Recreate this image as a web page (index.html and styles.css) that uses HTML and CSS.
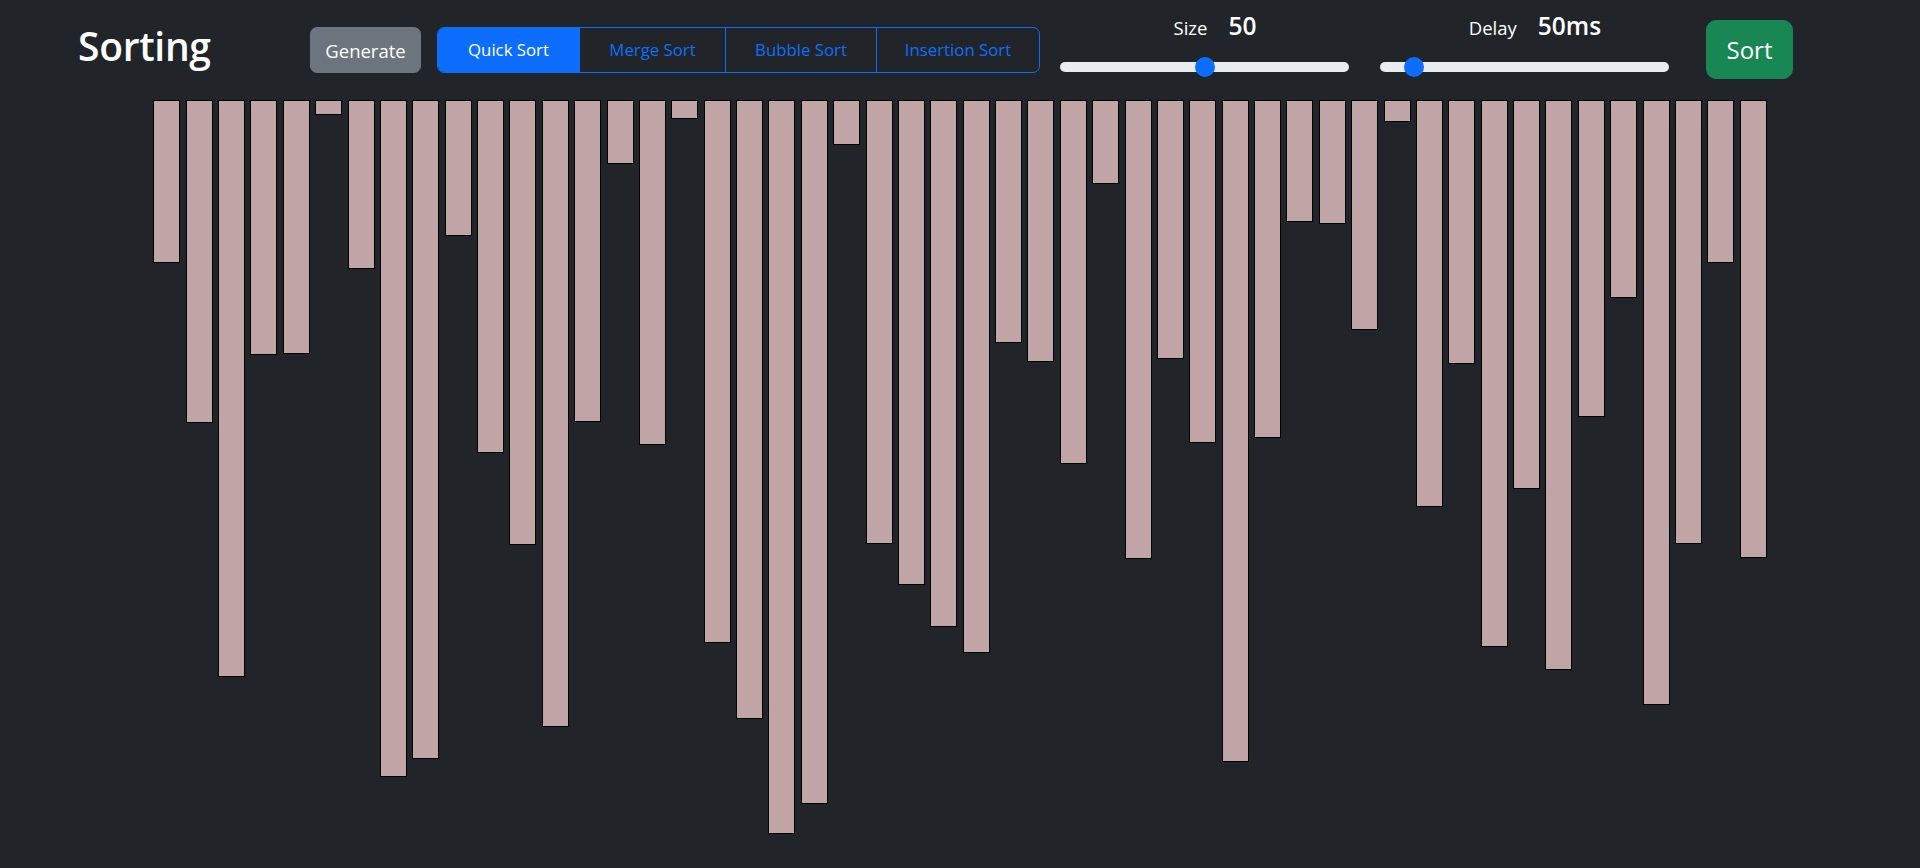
FILE: index.html
```html
<!DOCTYPE html>
<html lang="en">
<head>
<meta charset="utf-8">
<title>Sorting</title>
<link rel="stylesheet" href="styles.css">
</head>
<body>
<header class="topbar">
  <div class="brand-wrap"><h1 class="brand">Sorting</h1></div>
  <button class="btn btn-generate">Generate</button>
  <div class="algo-group">
    <button class="algo algo-quick active">Quick Sort</button>
    <button class="algo algo-merge">Merge Sort</button>
    <button class="algo algo-bubble">Bubble Sort</button>
    <button class="algo algo-insertion">Insertion Sort</button>
  </div>
  <div class="control control-size">
    <div class="control-label"><span class="label">Size</span><span class="value">50</span></div>
    <input type="range" class="range" min="0" max="100" value="50">
  </div>
  <div class="control control-delay">
    <div class="control-label"><span class="label">Delay</span><span class="value">50ms</span></div>
    <input type="range" class="range" min="10" max="450" value="50">
  </div>
  <button class="btn btn-sort">Sort</button>
</header>
<main class="bars">
  <div class="bar" style="height:163px"></div>
  <div class="bar" style="height:323px"></div>
  <div class="bar" style="height:577px"></div>
  <div class="bar" style="height:255px"></div>
  <div class="bar" style="height:254px"></div>
  <div class="bar" style="height:15px"></div>
  <div class="bar" style="height:169px"></div>
  <div class="bar" style="height:677px"></div>
  <div class="bar" style="height:659px"></div>
  <div class="bar" style="height:136px"></div>
  <div class="bar" style="height:353px"></div>
  <div class="bar" style="height:445px"></div>
  <div class="bar" style="height:627px"></div>
  <div class="bar" style="height:322px"></div>
  <div class="bar" style="height:64px"></div>
  <div class="bar" style="height:345px"></div>
  <div class="bar" style="height:19px"></div>
  <div class="bar" style="height:543px"></div>
  <div class="bar" style="height:619px"></div>
  <div class="bar" style="height:734px"></div>
  <div class="bar" style="height:704px"></div>
  <div class="bar" style="height:45px"></div>
  <div class="bar" style="height:444px"></div>
  <div class="bar" style="height:485px"></div>
  <div class="bar" style="height:527px"></div>
  <div class="bar" style="height:553px"></div>
  <div class="bar" style="height:243px"></div>
  <div class="bar" style="height:262px"></div>
  <div class="bar" style="height:364px"></div>
  <div class="bar" style="height:84px"></div>
  <div class="bar" style="height:459px"></div>
  <div class="bar" style="height:259px"></div>
  <div class="bar" style="height:343px"></div>
  <div class="bar" style="height:662px"></div>
  <div class="bar" style="height:338px"></div>
  <div class="bar" style="height:122px"></div>
  <div class="bar" style="height:124px"></div>
  <div class="bar" style="height:230px"></div>
  <div class="bar" style="height:22px"></div>
  <div class="bar" style="height:407px"></div>
  <div class="bar" style="height:264px"></div>
  <div class="bar" style="height:547px"></div>
  <div class="bar" style="height:389px"></div>
  <div class="bar" style="height:570px"></div>
  <div class="bar" style="height:317px"></div>
  <div class="bar" style="height:198px"></div>
  <div class="bar" style="height:605px"></div>
  <div class="bar" style="height:444px"></div>
  <div class="bar" style="height:163px"></div>
  <div class="bar" style="height:458px"></div>
</main>
</body>
</html>
```

FILE: styles.css
```css
html, body {
  margin: 0;
  padding: 0;
  background: #212529;
  color: #ffffff;
  font-family: "Open Sans", "Noto Sans", "DejaVu Sans", sans-serif;
  height: 100%;
  overflow: hidden;
}

.topbar {
  display: flex;
  align-items: center;
  height: 99.5px;
  box-sizing: border-box;
}

.brand-wrap {
  flex: 0 0 232px;
  margin-left: 78px;
  padding-bottom: 7px;
}

.brand {
  margin: 0;
  font-size: 39px;
  font-weight: 600;
  line-height: 48px;
  color: #ffffff;
  letter-spacing: -0.3px;
}

.btn {
  font-family: inherit;
  border: 1px solid transparent;
  color: #ffffff;
  cursor: pointer;
  box-sizing: border-box;
  padding: 0;
  text-align: center;
}

.btn-generate {
  width: 111px;
  height: 46.5px;
  background: #6c757d;
  border-color: #6c757d;
  border-radius: 7px;
  font-size: 18.5px;
  padding-top: 2px;
  margin-right: 16px;
}

.algo-group {
  display: flex;
  height: 46.5px;
  box-sizing: border-box;
  border: 1px solid #0d6efd;
  border-radius: 7px;
  overflow: hidden;
  margin-right: 20px;
}

.algo {
  font-family: inherit;
  font-size: 16.8px;
  color: #0d6efd;
  background: transparent;
  border: 0;
  border-left: 1px solid #0d6efd;
  box-sizing: border-box;
  padding: 0;
  height: 100%;
  text-align: center;
}

.algo-quick { width: 141px; border-left: 0; }
.algo-merge { width: 146px; }
.algo-bubble { width: 151px; }
.algo-insertion { width: 163px; }

.algo.active {
  background: #0d6efd;
  color: #ffffff;
}

.control {
  display: flex;
  flex-direction: column;
  align-items: center;
  width: 289px;
  padding-bottom: 9.5px;
}

.control-size { margin-right: 31px; }
.control-delay { margin-right: 37px; }

.control-label {
  display: flex;
  align-items: baseline;
  gap: 21px;
  padding-left: 21px;
  line-height: 25px;
  height: 25px;
  margin-bottom: 19.5px;
}

.label {
  font-size: 18.5px;
  color: #ffffff;
}

.value {
  font-size: 24.5px;
  font-weight: 600;
  color: #ffffff;
}

.range {
  -webkit-appearance: none;
  appearance: none;
  display: block;
  width: 289px;
  height: 20px;
  margin: 0;
  padding: 0;
  background: transparent;
}

.range::-webkit-slider-runnable-track {
  height: 10px;
  background: #e9ecef;
  border-radius: 10px;
  border: 0;
}

.range::-webkit-slider-thumb {
  -webkit-appearance: none;
  appearance: none;
  width: 20px;
  height: 20px;
  border-radius: 50%;
  background: #0d6efd;
  border: 0;
  margin-top: -5px;
}

.btn-sort {
  width: 87px;
  height: 59px;
  background: #198754;
  border-color: #198754;
  border-radius: 10px;
  font-size: 24px;
}

.bars {
  display: flex;
  justify-content: center;
  align-items: flex-start;
  gap: 5.39px;
}

.bar {
  flex: 0 0 27px;
  width: 27px;
  box-sizing: border-box;
  background: #c1a5a6;
  border: 1px solid #000000;
}
```
